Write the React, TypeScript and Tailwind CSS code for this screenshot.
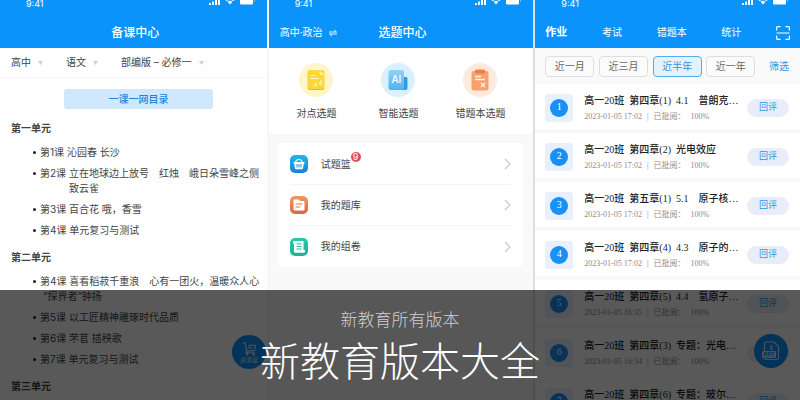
import type { ReactNode } from "react";
import clsx from "clsx";

type Lesson = { name: string; title: string; more?: string; hanging?: boolean };

const units: { name: string; lessons: Lesson[] }[] = [
  {
    name: "第一单元",
    lessons: [
      { name: "第1课", title: "沁园春 长沙" },
      {
        name: "第2课",
        title: "立在地球边上放号　红烛　峨日朵雪峰之侧",
        more: "致云雀",
        hanging: true,
      },
      { name: "第3课", title: "百合花 哦，香雪" },
      { name: "第4课", title: "单元复习与测试" },
    ],
  },
  {
    name: "第二单元",
    lessons: [
      {
        name: "第4课",
        title: "喜看稻菽千重浪　心有一团火，温暖众人心",
        more: "“探界者”钟扬",
      },
      { name: "第5课", title: "以工匠精神雕琢时代品质" },
      { name: "第6课", title: "芣苢 插秧歌" },
      { name: "第7课", title: "单元复习与测试" },
    ],
  },
  { name: "第三单元", lessons: [] },
];

const homework = [
  { title: "高一20班  第四章(1)  4.1　普朗克…", time: "2023-01-05 17:02" },
  { title: "高一20班  第四章(2)  光电效应", time: "2023-01-05 17:02" },
  { title: "高一20班  第五章(1)  5.1　原子核…", time: "2023-01-05 17:02" },
  { title: "高一20班  第四章(4)  4.3　原子的…", time: "2023-01-05 17:02" },
  { title: "高一20班  第四章(5)  4.4　氢原子…", time: "2023-01-05 16:35" },
  { title: "高一20班  第四章(3)  专题：光电…", time: "2023-01-05 16:34" },
  { title: "高一20班  第四章(6)  专题：玻尔…", time: "2023-01-05 16:34" },
];

const StatusBar = () => (
  <div className="h-4 pl-[26px] pr-3 flex justify-between items-start text-white">
    <span className="text-[9px] leading-[7px]">9:41</span>
    <svg width="46" height="6" viewBox="0 0 46 6" fill="currentColor">
      <rect x="0" y="3" width="2" height="2" rx="0.5" />
      <rect x="3" y="1.5" width="2" height="3.5" rx="0.5" />
      <rect x="6" y="0" width="2" height="5" />
      <rect x="9" y="0" width="2" height="5" />
      <path d="M16.5 0h9l-1.2 1.2a4.7 4.7 0 0 0-6.6 0zM18.6 2a3.4 3.4 0 0 1 4.8 0L21 4.6z" />
      <path d="M31 0h13v3.2a1.2 1.2 0 0 1-1.2 1.2H32.2A1.2 1.2 0 0 1 31 3.2z" />
      <rect x="45" y="0" width="0.8" height="2" opacity="0.5" />
    </svg>
  </div>
);

const Header = ({ children }: { children: ReactNode }) => (
  <header className="bg-[#0b93fc] text-white">
    <StatusBar />
    <div className="h-8 pt-px relative flex items-center">{children}</div>
  </header>
);

const Filter = ({ label }: { label: string }) => (
  <button className="flex items-center gap-[7px] whitespace-nowrap">
    {label}
    <svg width="5" height="4" viewBox="0 0 5 4">
      <path d="M0 0h5L2.5 4z" fill="#cfcfcf" />
    </svg>
  </button>
);

const PrepareCenter = () => (
  <section className="relative bg-white text-[#444] text-[10px]">
    <Header>
      <h2 className="w-full text-center text-xs font-medium pl-1">备课中心</h2>
    </Header>

    <div className="h-[30px] pl-[11px] flex items-center gap-[23px] border-b border-[#f6f6f6]">
      <Filter label="高中" />
      <Filter label="语文" />
      <Filter label="部编版 – 必修一" />
    </div>

    <button className="block w-[149px] h-5 mt-[11px] ml-16 rounded-[3px] bg-[#d0e8fe] text-[#1b86dc] font-medium">
      一课一网目录
    </button>

    {units.map((unit) => (
      <div key={unit.name} className="pt-3 pl-[11px] leading-[15px]">
        <h3 className="font-bold">{unit.name}</h3>
        <ul className="mt-[9px] pl-[22px] flex flex-col gap-[6px]">
          {unit.lessons.map((lesson) => (
            <li key={lesson.name} className="flex gap-1 whitespace-nowrap">
              <span className="size-[3px] mt-[6px] rounded-full bg-[#222] shrink-0" />
              <div>
                {lesson.name} {lesson.title}
                {lesson.more && (
                  <div className={lesson.hanging ? "pl-[29px]" : "pl-[3px]"}>
                    {lesson.more}
                  </div>
                )}
              </div>
            </li>
          ))}
        </ul>
      </div>
    ))}

    {/* resource basket */}
    <button className="absolute left-[232px] top-[335px] size-[34px] rounded-full bg-[#0b93fc] text-white/80 flex flex-col items-center justify-center">
      <svg width="15" height="15" viewBox="0 0 16 15" fill="none" stroke="currentColor" strokeWidth="1.2">
        <path d="M1 1.500h2.300l1.900 8.500h8l1.300-6H7.500v3h4M5.200 10 4 12h9.500" />
        <circle cx="5.5" cy="13.5" r="0.8" />
        <circle cx="12.5" cy="13.5" r="0.8" />
      </svg>
      <span className="text-[6px] leading-[8px]">资源篮</span>
    </button>
  </section>
);

const Entry = ({ label, className, children }: { label: string; className: string; children: ReactNode }) => (
  <button className="w-[82px] flex flex-col items-center gap-2">
    <span className={clsx("size-[34px] rounded-full flex items-center justify-center", className)}>
      {children}
    </span>
    <span className="leading-4">{label}</span>
  </button>
);

const MenuRow = ({ label, badge, icon }: { label: string; badge?: number; icon: ReactNode }) => (
  <button className="w-full h-[41px] flex items-center border-b border-[#f4f4f4] last:border-0">
    {icon}
    <span className="ml-[13px] relative">
      {label}
      {badge && (
        <span className="absolute left-full -top-[5px] size-[10px] rounded-full bg-[#e34d59] text-white text-[9px] leading-[10px] text-center">
          {badge}
        </span>
      )}
    </span>
    <svg className="ml-auto" width="7" height="12" viewBox="0 0 7 12" fill="none" stroke="#c8c8c8" strokeWidth="1.2">
      <path d="m1 1 5 5-5 5" />
    </svg>
  </button>
);

const TopicCenter = () => (
  <section className="bg-[#f9f9fa] text-[#444] text-[10px] border-l-2 border-[#f7f7f7]">
    <Header>
      <button className="absolute left-[11px] flex items-center gap-[6px]">
        高中·政治
        <svg width="8" height="8" viewBox="0 0 8 8" fill="none" stroke="currentColor" strokeWidth="0.9">
          <path d="M0 3h7.5L5 .8M8 5H.5L3 7.2" />
        </svg>
      </button>
      <h2 className="w-full text-center text-xs font-medium pl-[3px]">选题中心</h2>
    </Header>

    <div className="h-[86px] pt-[15px] pr-[5px] flex justify-center bg-white rounded-b-sm">
      <Entry label="对点选题" className="bg-[#fef5c9]">
        <svg width="18" height="22" viewBox="0 0 18 22">
          <rect x="0.5" y="1" width="17" height="20" rx="2" fill="#fbd83a" />
          <path d="M12.5 1 17.5 6h-4a1 1 0 0 1-1-1z" fill="#fff0a0" />
          <path d="M3.5 6.5h5M3.5 9.5h8" stroke="#fff8d0" strokeWidth="1.2" fill="none" />
          <path d="M9 15.500v-2.500M14 11v3.500" stroke="#fff8d0" strokeWidth="1.1" fill="none" />
          <circle cx="8.3" cy="16.300" r="1.2" fill="#fff5b5" />
          <circle cx="13.3" cy="14.8" r="1.2" fill="#fff5b5" />
          <path d="M1 19a1.500 1.500 0 0 0 1.500 1.500H15.500a1.500 1.500 0 0 0 1.500-1.500" stroke="#e9bd20" fill="none" />
        </svg>
      </Entry>
      <Entry label="智能选题" className="bg-[#d9f1fe]">
        <svg width="20" height="22" viewBox="0 0 20 22">
          <defs>
            <linearGradient id="ai" x1="0" y1="0" x2="0" y2="1">
              <stop offset="0" stopColor="#8fd4fa" />
              <stop offset="1" stopColor="#4fb2f3" />
            </linearGradient>
          </defs>
          <path d="M13 8h5a1.5 1.5 0 0 1 1.5 1.5V19a2 2 0 0 1-2 2H13z" fill="#2b9cec" />
          <rect x="0.5" y="1" width="15.5" height="20" rx="2" fill="url(#ai)" />
          <text x="8.3" y="14.3" textAnchor="middle" fontSize="10" fontWeight="500" fill="#fff">AI</text>
        </svg>
      </Entry>
      <Entry label="错题本选题" className="bg-[#feeadd]">
        <svg width="18" height="22" viewBox="0 0 18 22">
          <rect x="0.5" y="2" width="17" height="19.5" rx="2" fill="#f9a06c" />
          <rect x="4" y="0.5" width="10" height="4" rx="1" fill="#ee8048" />
          <path d="M4 7.500h6M4 10.500h10" stroke="#fff0e6" strokeWidth="1.3" />
          <path d="m10 14 4 4m0-4-4 4" stroke="#fff" strokeWidth="1.3" />
        </svg>
      </Entry>
    </div>

    <div className="mt-[9px] ml-[9px] mr-[10px] px-3 pt-px bg-white rounded">
      <MenuRow
        label="试题篮"
        badge={9}
        icon={
          <svg width="18" height="18" viewBox="0 0 18 18">
            <defs>
              <linearGradient id="basket" x1="0" y1="0" x2="0" y2="1">
                <stop offset="0" stopColor="#25b4ee" />
                <stop offset="1" stopColor="#1484d6" />
              </linearGradient>
            </defs>
            <rect width="18" height="18" rx="5" fill="url(#basket)" />
            <path d="M5.5 8a3.5 3.5 0 0 1 7 0" fill="none" stroke="#fff" strokeWidth="1.1" />
            <path d="M3.5 7h11v1.500h-.7L13 13.500a1 1 0 0 1-1 .8H6a1 1 0 0 1-1-.8l-.8-5h-.7z" fill="#fff" />
            <path d="M7 9v3.500M9 9v3.500M11 9v3.500" stroke="#1b93de" />
          </svg>
        }
      />
      <MenuRow
        label="我的题库"
        icon={
          <svg width="18" height="18" viewBox="0 0 18 18">
            <defs>
              <linearGradient id="bank" x1="0" y1="0" x2="0" y2="1">
                <stop offset="0" stopColor="#f09a5e" />
                <stop offset="1" stopColor="#dc6548" />
              </linearGradient>
            </defs>
            <rect width="18" height="18" rx="5" fill="url(#bank)" />
            <path d="M4.5 3.5h4.3L10.300 5h3.200a1 1 0 0 1 1 1v7.500a1 1 0 0 1-1 1h-9a1 1 0 0 1-1-1v-9a1 1 0 0 1 1-1z" fill="#fff" />
            <path d="M5.5 8h7M5.500 11h4.500" stroke="#e37a50" strokeWidth="1.2" />
          </svg>
        }
      />
      <MenuRow
        label="我的组卷"
        icon={
          <svg width="18" height="18" viewBox="0 0 18 18">
            <defs>
              <linearGradient id="paper" x1="0" y1="0" x2="0" y2="1">
                <stop offset="0" stopColor="#27c9b2" />
                <stop offset="1" stopColor="#23b191" />
              </linearGradient>
            </defs>
            <rect width="18" height="18" rx="5" fill="url(#paper)" />
            <path d="M4.500 3h9v9H15v1.500a1.200 1.200 0 0 1-1.200 1.200H5.500A1.500 1.500 0 0 1 4 13.200V5.500H3V4.300A1.300 1.300 0 0 1 4.500 3z" fill="#fff" />
            <path d="M6.500 6h5M6.500 8.500h5M6.500 11h5" stroke="#25b99e" />
          </svg>
        }
      />
    </div>
  </section>
);

const ranges = ["近一月", "近三月", "近半年", "近一年"];

const Homework = () => (
  <section className="relative bg-[#f7f8f9] text-[10px] border-l-2 border-[#dcdfe2]">
    <Header>
      <nav className="w-full px-[10px] flex items-center justify-between">
        <button className="text-[11px] font-bold">作业</button>
        <button>考试</button>
        <button>错题本</button>
        <button>统计</button>
        <button aria-label="扫一扫">
          <svg width="14" height="14" viewBox="0 0 14 14" fill="none" stroke="currentColor" strokeWidth="1.2">
            <path d="M.6 4.500V1.600a1 1 0 0 1 1-1h2.900M9.500.6h2.900a1 1 0 0 1 1 1v2.900M13.400 9.500v2.900a1 1 0 0 1-1 1H9.500M4.500 13.400H1.600a1 1 0 0 1-1-1V9.500M.6 7h12.800" />
          </svg>
        </button>
      </nav>
    </Header>

    <div className="h-9 pl-[10px] pr-[11px] flex items-center justify-between bg-[#fafafa]">
      {ranges.map((range) => (
        <button
          key={range}
          className={clsx(
            "w-[49px] h-[21px] rounded border",
            range === "近半年"
              ? "border-[#58abe9] bg-[#e4f2fe] text-[#2c94e4]"
              : "border-[#dedede] bg-[#fbfbfb] text-[#666]"
          )}
        >
          {range}
        </button>
      ))}
      <button className="ml-[9px] text-[#2c94e4]">筛选</button>
    </div>

    <ul className="flex flex-col gap-1 font-['Liberation_Serif','Noto_Sans_CJK_SC',serif]">
      {homework.map((item, id) => (
        <li key={item.title} className="h-[45px] pl-[10px] pr-[11px] pt-[2px] flex items-center bg-white">
          <div className="size-7 rounded-[3px] bg-[#e8f0fe] flex items-center justify-center">
            <div className="size-[18px] rounded-full bg-[#1890f8] text-white leading-4 text-center">
              {id + 1}
            </div>
          </div>
          <div className="ml-[11px] pt-[3px] whitespace-pre">
            <div className="leading-4 font-medium text-[#222]">{item.title}</div>
            <div className="leading-4 text-[8px] text-[#8c8c8c] flex gap-[5px]">
              <span>{item.time}</span>
              <span>|</span>
              <span>已批阅：</span>
              <span>100%</span>
            </div>
          </div>
          <button className="ml-auto w-[42px] h-[18px] rounded-full bg-[#e8edf9] text-[9px] text-[#2f96e2]">
            回评
          </button>
        </li>
      ))}
    </ul>

    <button aria-label="PPT" className="absolute right-[12px] top-[334px] size-[34px] rounded-full bg-[#0b93fc] text-white/80 flex items-center justify-center">
      <svg width="18" height="20" viewBox="0 0 18 20" fill="none" stroke="currentColor" strokeWidth="1.2">
        <path d="M2.5 10V2.500A1.500 1.500 0 0 1 4 1h8l4.500 4.500V17a1.500 1.500 0 0 1-1.500 1.500H4A1.500 1.500 0 0 1 2.500 17" />
        <path d="M9.500 4.500v4M8 5h3M8 8h3" />
        <rect x="0" y="10" width="14" height="7" rx="1" fill="currentColor" stroke="none" />
        <text x="7" y="15.5" textAnchor="middle" fontSize="5.5" fontWeight="700" fill="#0b93fc" stroke="none">PPT</text>
      </svg>
    </button>
  </section>
);

export default function App() {
  return (
    <main className="relative h-screen overflow-hidden font-['Inter','Noto_Sans_CJK_SC',sans-serif]">
      <div className="h-full grid grid-cols-3">
        <PrepareCenter />
        <TopicCenter />
        <Homework />
      </div>

      {/* caption */}
      <div className="absolute inset-x-0 bottom-0 h-[110px] pt-[18px] bg-black/65 text-center font-light">
        <p className="text-[17px] leading-6 text-[#d0d0d0]">新教育所有版本</p>
        <h1 className="text-[40px] leading-[60px] text-white">新教育版本大全</h1>
      </div>
    </main>
  );
}
